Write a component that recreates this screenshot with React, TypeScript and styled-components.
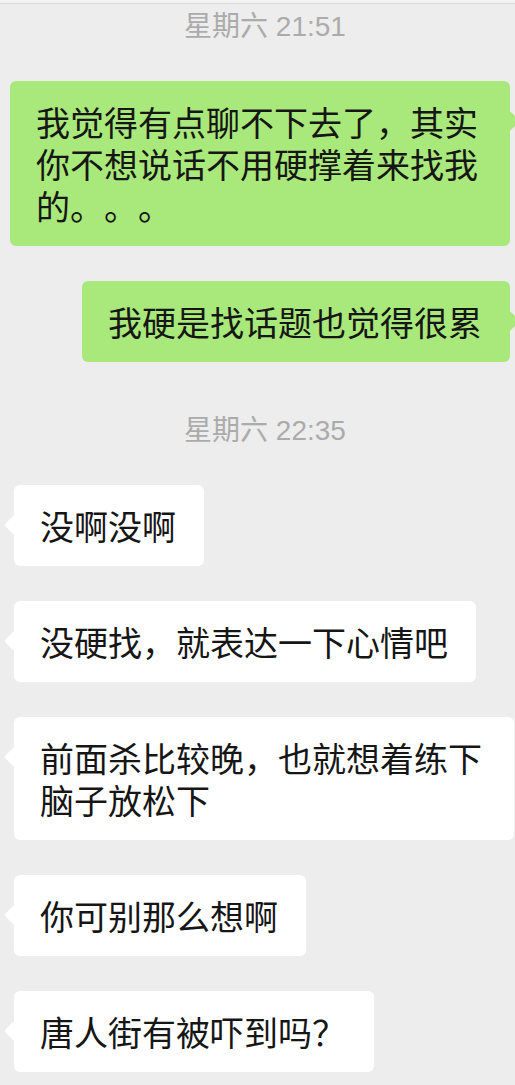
import styled, { createGlobalStyle } from "styled-components";

const GlobalStyle = createGlobalStyle`
  html, body {
    margin: 0;
    padding: 0;
    background: #ededed;
    overflow-x: hidden;
  }
  * {
    box-sizing: border-box;
  }
`;

const Screen = styled.div`
  width: 515px;
  min-height: 1085px;
  background: #ededed;
  font-family: "Noto Sans CJK SC", "Noto Sans", sans-serif;
`;

const TopEdge = styled.div`
  height: 4px;
  background: #f3f3f3;
  border-bottom: 1px solid #d9d9d9;
`;

const Messages = styled.div`
  display: flex;
  flex-direction: column;
  padding-top: 3px;
`;

const Time = styled.div<{ $first?: boolean }>`
  margin: ${(p) => (p.$first ? "0" : "14px")} 0 34px;
  padding-left: 15px;
  height: 40px;
  line-height: 40px;
  text-align: center;
  font-family: "Liberation Sans", "Noto Sans CJK SC", sans-serif;
  font-size: 28px;
  color: #ababab;
`;

const Row = styled.div<{ $mine?: boolean }>`
  display: flex;
  justify-content: ${(p) => (p.$mine ? "flex-end" : "flex-start")};
  padding: ${(p) => (p.$mine ? "0 5px 0 10px" : "0 1px 0 14px")};
  margin-bottom: 35px;
`;

const Bubble = styled.div<{ $mine?: boolean }>`
  position: relative;
  max-width: 500px;
  padding: 20px 28px 19px 26px;
  border-radius: 6px;
  background: ${(p) => (p.$mine ? "#a9e87a" : "#ffffff")};
  color: #161616;
  font-size: 34px;
  line-height: 42px;
  word-break: break-all;
  text-spacing-trim: space-all;

  &::before {
    content: "";
    position: absolute;
    top: 33px;
    ${(p) => (p.$mine ? "right: -7px;" : "left: -7px;")}
    width: 14px;
    height: 14px;
    border-radius: 2px;
    background: inherit;
    transform: rotate(45deg);
  }
`;

type Msg = { mine?: boolean; text: string };

const block1: Msg[] = [
  { mine: true, text: "我觉得有点聊不下去了，其实你不想说话不用硬撑着来找我的。。。" },
  { mine: true, text: "我硬是找话题也觉得很累" },
];

const block2: Msg[] = [
  { text: "没啊没啊" },
  { text: "没硬找，就表达一下心情吧" },
  { text: "前面杀比较晚，也就想着练下脑子放松下" },
  { text: "你可别那么想啊" },
  { text: "唐人街有被吓到吗？" },
];

const renderMsgs = (list: Msg[]) =>
  list.map((m, i) => (
    <Row key={i} $mine={m.mine}>
      <Bubble $mine={m.mine}>{m.text}</Bubble>
    </Row>
  ));

const App = () => {
  return (
    <Screen>
      <GlobalStyle />
      <TopEdge />
      <Messages>
        <Time $first>星期六 21:51</Time>
        {renderMsgs(block1)}
        <Time>星期六 22:35</Time>
        {renderMsgs(block2)}
      </Messages>
    </Screen>
  );
};

export default App;
